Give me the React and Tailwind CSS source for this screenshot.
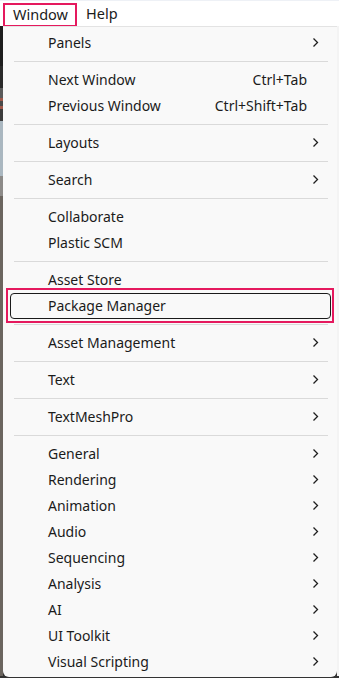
import React from "react";

const Chevron = () => (
  <svg width="7" height="11" viewBox="0 0 7 11" className="shrink-0">
    <polyline points="1.5,1.5 5.5,5.5 1.5,9.5" fill="none" stroke="#1f1f1f" strokeWidth="1.3" strokeLinejoin="miter" />
  </svg>
);

const items = [
  { t: "Panels", sub: true },
  "sep",
  { t: "Next Window", k: "Ctrl+Tab" },
  { t: "Previous Window", k: "Ctrl+Shift+Tab" },
  "sep",
  { t: "Layouts", sub: true },
  "sep",
  { t: "Search", sub: true },
  "sep",
  { t: "Collaborate" },
  { t: "Plastic SCM" },
  "sep",
  { t: "Asset Store" },
  { t: "Package Manager", hl: true },
  "sep",
  { t: "Asset Management", sub: true },
  "sep",
  { t: "Text", sub: true },
  "sep",
  { t: "TextMeshPro", sub: true },
  "sep",
  { t: "General", sub: true },
  { t: "Rendering", sub: true },
  { t: "Animation", sub: true },
  { t: "Audio", sub: true },
  { t: "Sequencing", sub: true },
  { t: "Analysis", sub: true },
  { t: "AI", sub: true },
  { t: "UI Toolkit", sub: true },
  { t: "Visual Scripting", sub: true },
];

export default function App() {
  return (
    <div
      className="w-[339px] h-[678px] bg-[#333333] flex flex-col overflow-hidden text-[#1b1b1b]"
      style={{ fontFamily: '"Noto Sans", "Open Sans", sans-serif' }}
    >
      <div className="h-[26px] shrink-0 bg-white border-t border-[#eef1f6] flex items-center text-[14.5px] leading-none">
        <div className="ml-[3px] h-[24px] w-[74px] border-2 border-[#e5195e] flex items-center pl-[8px] mt-[2px]">
          Window
        </div>
        <div className="ml-[9px]">Help</div>
      </div>
      <div className="flex flex-1 min-h-0">
        <div className="w-[3px] flex flex-col shrink-0">
          <div className="h-[40px] bg-[#1e1e1e]" />
          <div className="h-[22px] bg-[#2a2a2a]" />
          <div className="h-[10px] bg-[#5b5b5b]" />
          <div className="h-[3px] bg-[#a0584a]" />
          <div className="h-[5px] bg-[#4a4a4a]" />
          <div className="h-[3px] bg-[#a0584a]" />
          <div className="h-[12px] bg-[#3c3c3c]" />
          <div className="h-[55px] bg-[#aab7c0]" />
          <div className="h-[20px] bg-[#8c8a88]" />
          <div className="flex-1 bg-[#6b655f]" />
          <div className="h-[2px] bg-[#333333]" />
        </div>
        <div className="w-[334px] shrink-0 h-[651px] bg-[#f9f9f9] border-t border-[#e3e3e3] rounded-b-[6px] pt-[3px] text-[14px]">
          {items.map((it, i) =>
            it === "sep" ? (
              <div key={i} className="h-[11px] flex items-center pl-[11px] pr-[9px]">
                <div className="h-px w-full bg-[#dadada]" />
              </div>
            ) : (
              <div key={i} className="h-[26px] px-[7px] pr-[6px]">
                <div
                  className={
                    "relative h-[26px] flex items-center pb-[2px] pl-[38px] pr-[12px] rounded-[4px] " +
                    (it.hl ? "border border-[#1a1a1a]" : "")
                  }
                >
                  {it.hl && (
                    <div className="absolute -top-[6px] -left-[5px] -right-[4px] -bottom-[5px] border-2 border-[#e5195e] pointer-events-none" />
                  )}
                  <span className={"flex-1 " + (it.hl ? "-ml-px" : "")}>{it.t}</span>
                  {it.k && <span className="mr-[12px]">{it.k}</span>}
                  {it.sub && <Chevron />}
                </div>
              </div>
            )
          )}
        </div>
        <div className="flex-1 flex flex-col">
          <div className="flex-1 bg-[#f4f4f4]" />
          <div className="h-[2px] bg-[#333333]" />
        </div>
      </div>
    </div>
  );
}
